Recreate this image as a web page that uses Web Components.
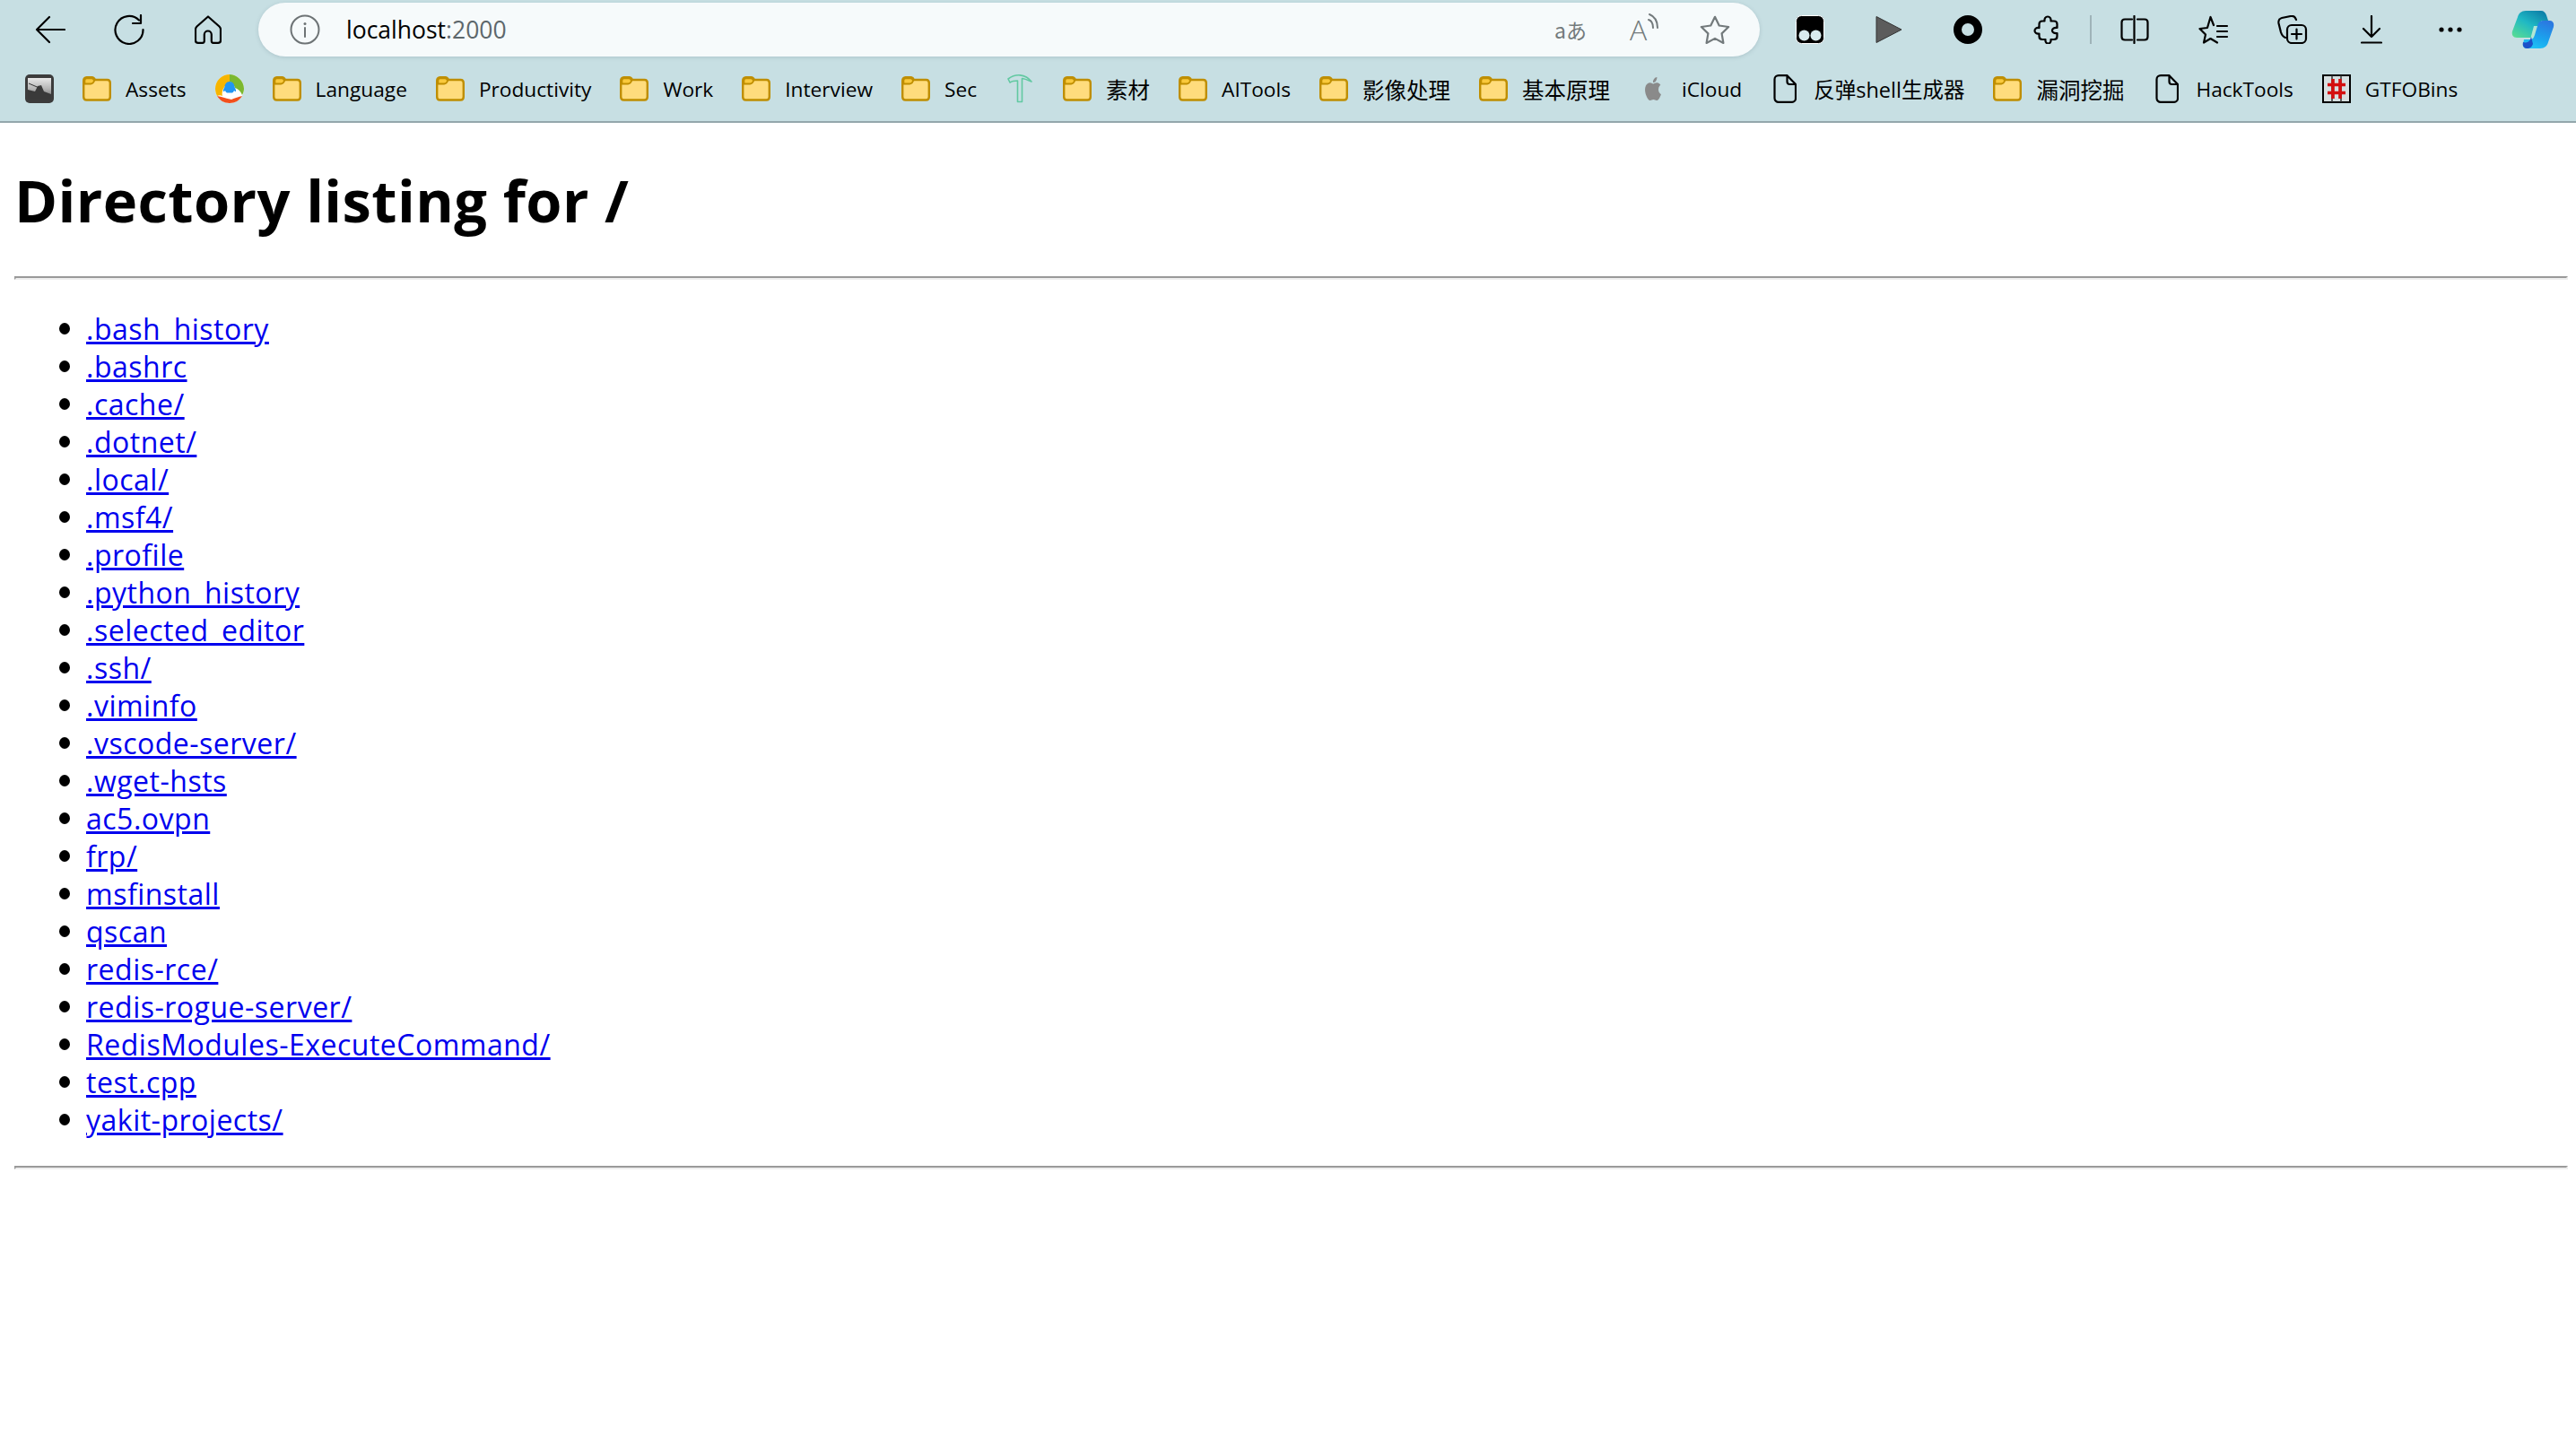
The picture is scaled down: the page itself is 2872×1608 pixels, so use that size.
<!DOCTYPE html>
<html lang="en">
<head>
<meta charset="utf-8">
<title>Directory listing for /</title>
<style>
  html, body { margin: 0; padding: 0; background: #fff; }
  body {
    font-family: "Open Sans", "Noto Sans CJK SC", sans-serif;
    --bar-color: #c7dfe3;
  }
</style>
</head>
<body>
<browser-toolbar></browser-toolbar>
<bookmark-bar></bookmark-bar>
<directory-page heading="Directory listing for /">
  <file-row>.bash_history</file-row>
  <file-row>.bashrc</file-row>
  <file-row>.cache/</file-row>
  <file-row>.dotnet/</file-row>
  <file-row>.local/</file-row>
  <file-row>.msf4/</file-row>
  <file-row>.profile</file-row>
  <file-row>.python_history</file-row>
  <file-row>.selected_editor</file-row>
  <file-row>.ssh/</file-row>
  <file-row>.viminfo</file-row>
  <file-row>.vscode-server/</file-row>
  <file-row>.wget-hsts</file-row>
  <file-row>ac5.ovpn</file-row>
  <file-row>frp/</file-row>
  <file-row>msfinstall</file-row>
  <file-row>qscan</file-row>
  <file-row>redis-rce/</file-row>
  <file-row>redis-rogue-server/</file-row>
  <file-row>RedisModules-ExecuteCommand/</file-row>
  <file-row>test.cpp</file-row>
  <file-row>yakit-projects/</file-row>
</directory-page>

<script>
// All the icons live here, drawn on a 32 box unless they say otherwise.
const line = 'fill="none" stroke="#000" stroke-width="2.2" stroke-linecap="round" stroke-linejoin="round"';
const ICONS = {
  back: `<svg width="34" height="32" viewBox="0 0 34 32"><path ${line} d="M16 2 2 16l14 14M2 16h31"/></svg>`,
  reload: `<svg width="34" height="34" viewBox="0 0 34 34"><path ${line} d="M28 6.5A15.5 15.5 0 1 0 32.5 17M30 1v9h-9"/></svg>`,
  home: `<svg width="30" height="32" viewBox="0 0 30 32"><path ${line} d="M15 1.5 2.500 12.500C1.500 13.400 1 14.400 1 15.800V28c0 1.600 1.200 2.800 2.800 2.800h5c1.200 0 2-.9 2-2v-7.300c0-2.200 1.800-4 4-4s4 1.800 4 4v7.300c0 1.100.9 2 2 2h5.300c1.600 0 2.900-1.200 2.900-2.800V15.800c0-1.400-.5-2.400-1.500-3.300Z"/></svg>`,
  info: `<svg width="34" height="34" viewBox="0 0 34 34"><circle cx="17" cy="17" r="15.500" fill="none" stroke="#6d7375" stroke-width="2"/><path d="M17 15v10" stroke="#6d7375" stroke-width="2" stroke-linecap="round"/><circle cx="17" cy="10.500" r="1.500" fill="#6d7375"/></svg>`,
  star: `<svg width="34" height="32" viewBox="0 0 34 32"><path fill="none" stroke="#737a7c" stroke-width="2.200" stroke-linejoin="round" d="M17 1.800l4.700 9.700 10.500 1.500-7.600 7.400 1.800 10.600L17 25.900 7.600 31l1.800-10.600L1.800 13l10.500-1.500Z"/></svg>`,
  tamper: `<svg width="32" height="32" viewBox="0 0 32 32"><rect x=".5" y=".5" width="31" height="31" rx="6" fill="#000" stroke="#fff"/><circle cx="9.500" cy="22.500" r="6" fill="#d9ebee"/><circle cx="22.500" cy="22.500" r="6" fill="#d9ebee"/></svg>`,
  play: `<svg width="30" height="32" viewBox="0 0 30 32"><path fill="#5c5c5c" stroke="#333" d="M1 1.500 29 16 1 30.500Z"/></svg>`,
  ring: `<svg width="32" height="32" viewBox="0 0 32 32"><circle cx="16" cy="16" r="11.500" fill="none" stroke="#000" stroke-width="9"/></svg>`,
  puzzle: `<svg width="30" height="32" viewBox="0 0 30 32"><path ${line} d="M10 6.500h2.500c-.4-3 1.200-5 3.500-5s3.900 2 3.500 5h3.500c2 0 3.500 1.500 3.500 3.500v4c-3-.6-5.500.8-5.500 3s2.500 3.600 5.500 3v3.500c0 2-1.500 3.500-3.500 3.500h-3.500c.4 3-1.200 4.600-3 4.600s-3.400-1.600-3-4.600H10c-2 0-3.500-1.500-3.500-3.500v-3c-3 .6-5-1-5-3.200s2-3.800 5-3.200V10c0-2 1.500-3.500 3.500-3.500Z"/></svg>`,
  split: `<svg width="32" height="32" viewBox="0 0 32 32"><path ${line} d="M13 4.500H5C3 4.500 1.500 6 1.500 8v16c0 2 1.500 3.500 3.500 3.500h8M19 4.500h8c2 0 3.500 1.500 3.500 3.500v16c0 2-1.500 3.500-3.500 3.500h-8M15.500 1v30"/></svg>`,
  favs: `<svg width="34" height="32" viewBox="0 0 34 32"><path ${line} d="M21 30.500 13.500 26 6 30.500 8 21.500 1.500 15l8.500-1L13.500 2 17 11M21 12h11M21 18h11M21 24h11"/></svg>`,
  collect: `<svg width="34" height="32" viewBox="0 0 34 32"><path ${line} d="M9 25C6 24 5 22 4 19L1.500 9C1 6 2.500 3.500 5 3L15 1c3-.5 5 1 6 4"/><rect ${line} x="11" y="11" width="21" height="20" rx="5"/><path ${line} d="M21.500 15.500v11M16 21h11"/></svg>`,
  download: `<svg width="24" height="32" viewBox="0 0 24 32"><path ${line} d="M12 1v23M3 15l9 9 9-9M1 30.500h22"/></svg>`,
  more: `<svg width="26" height="6" viewBox="0 0 26 6"><circle cx="3" cy="3" r="2.600"/><circle cx="13" cy="3" r="2.600"/><circle cx="23" cy="3" r="2.600"/></svg>`,
  copilot: `<svg width="48" height="44" viewBox="0 0 48 44">
    <defs>
      <linearGradient id="cl" x1=".8" y1="0" x2=".1" y2="1"><stop offset="0" stop-color="#0c7fa8"/><stop offset=".45" stop-color="#1fb8c4"/><stop offset="1" stop-color="#5fe08f"/></linearGradient>
      <linearGradient id="cr" x1=".7" y1="0" x2=".3" y2="1"><stop offset="0" stop-color="#2b78e0"/><stop offset=".6" stop-color="#1aa4ee"/><stop offset="1" stop-color="#20c4f5"/></linearGradient>
    </defs>
    <path fill="url(#cl)" d="M16 1h17c3 0 5 2 6 5l2 6h-5c-3 0-5 2-6 5l-5 17c-1-2-2-3-4-3H6c-4 0-6-3-5-7L7 8c1-4 4-7 9-7Z"/>
    <path fill="#c9ecd9" d="M21 33h7l3-15-6 0Z" opacity=".85"/>
    <path fill="url(#cr)" d="M32 43H17c-3 0-5-3-4-5l1-5h6c4 0 5-2 6-5l3-10c1-4 3-6 7-6h7c3 0 5 3 4 7l-6 17c-1 4-4 7-9 7Z"/>
    <path fill="#1d50c8" d="M13 36c3 1 7 0 8-3l1-3 2 8c-1 3-3 5-7 5-3 0-5-3-4-7Z"/>
  </svg>`,
  folder: `<svg width="32" height="28" viewBox="0 0 32 28"><path fill="#ffdc7d" stroke="#bf8e00" stroke-width="2.400" stroke-linejoin="round" d="M1.200 5c0-2 1.300-3.800 3.300-3.800h6c1.500 0 2.500.6 3.500 2.800h13.500c2.500 0 3.300 1.500 3.300 3.500v15.500c0 2.500-1.300 3.500-3.300 3.500H4.500c-2 0-3.300-1.300-3.300-3.500Z"/><path fill="#f9c93c" stroke="#bf8e00" stroke-width="1.800" d="M2.400 8.500V5c0-1.300.8-2.600 2.200-2.600h5.600c1.400 0 2 .8 3 2.600-1 2.500-2 3.500-4 3.500Z"/></svg>`,
  doc: `<svg width="26" height="32" viewBox="0 0 26 32"><path ${line} d="M6 1.200h9.500L25 11v15.500c0 2.500-1.800 4.300-4 4.300H6c-2.500 0-4.500-1.800-4.500-4.300V5.500C1.500 3 3.500 1.200 6 1.200ZM15.500 1.200V8c0 2 1 3 3 3H25"/></svg>`,
  avatar: `<svg width="32" height="32" viewBox="0 0 32 32">
    <defs><linearGradient id="av" x1="0" y1="0" x2="0" y2="1"><stop offset="0" stop-color="#e8e8e8"/><stop offset=".5" stop-color="#b5b5b5"/><stop offset="1" stop-color="#666"/></linearGradient></defs>
    <rect width="32" height="32" rx="5" fill="#3c3c3c"/><rect x="3" y="4" width="26" height="24" fill="url(#av)"/>
    <path fill="#3a3a3a" d="M3 17l8 2 3-6 4-1 3 7 8 3v6H3Z"/><path stroke="#333" stroke-width="1" d="M4 10l14 6"/>
  </svg>`,
  qq: `<svg width="32" height="32" viewBox="0 0 32 32">
    <circle cx="16" cy="16" r="16" fill="#fff"/>
    <path fill="#f7b500" d="M16 0C7 0 0 7 0 16c0 3 1 6 2 8 2-1 4-1 6 0-1-4 0-10 8-16Z"/>
    <path fill="#7cb82f" d="M16 0c8 0 16 7 16 16 0 3-1 5-2 7-2-5-5-7-8-8-1-3-3-6-6-7Z"/>
    <path fill="#f2501c" d="M2 24c3 5 8 8 14 8 6 0 11-3 14-8-4 1-8 2-12 4-5-1-10-3-16-4Z"/>
    <path fill="#2296f3" d="M16 8c3.500 0 5.500 3 5.500 6 1 1.500 1.700 3.500 1.500 5-1 0-1.500-.5-2-1-.5 1-1 2-2 2.500h-6c-1-.5-1.500-1.500-2-2.500-.5.5-1 1-2 1-.2-1.500.5-3.500 1.500-5 0-3 2-6 5.500-6Z"/>
  </svg>`,
  pick: `<svg width="28" height="32" viewBox="0 0 28 32"><path fill="none" stroke="#62c9a2" stroke-width="1.600" stroke-linejoin="round" d="M1 5C9-1 20-1 27 8 20 5 17 4.500 16.500 4.500V30.500h-5V7C8 7 5 7.500 3 9Z"/></svg>`,
  apple: `<svg width="22" height="26" viewBox="0 0 24 24" preserveAspectRatio="none"><path fill="#8a8a8a" d="M12.152 6.896c-.948 0-2.415-1.078-3.960-1.040-2.040.027-3.910 1.183-4.961 3.014-2.117 3.675-.546 9.103 1.519 12.090 1.013 1.454 2.208 3.090 3.792 3.039 1.520-.065 2.090-.987 3.935-.987 1.831 0 2.350.987 3.960.948 1.637-.026 2.676-1.480 3.676-2.948 1.156-1.688 1.636-3.325 1.662-3.415-.039-.013-3.182-1.221-3.220-4.857-.026-3.040 2.480-4.494 2.597-4.559-1.429-2.090-3.623-2.324-4.390-2.376-2-.156-3.675 1.090-4.610 1.090zM15.530 3.830c.843-1.012 1.400-2.427 1.245-3.830-1.207.052-2.662.805-3.532 1.818-.780.896-1.454 2.338-1.273 3.714 1.338.104 2.715-.688 3.559-1.701"/></svg>`,
  gtfo: `<svg width="32" height="32" viewBox="0 0 32 32"><rect x="1" y="1" width="30" height="30" fill="#d6dfe0" stroke="#000" stroke-width="2"/><path stroke="#333" stroke-width="1.500" d="M11 1v30M21 1v30"/><path stroke="#d40f0f" stroke-width="3.600" d="M12 5v22M20 5v22M6 11.500h20M6 20.500h20"/></svg>`
};

class ToolButton extends HTMLElement {
  constructor() {
    super();
    this.attachShadow({ mode: "open" });
  }
  connectedCallback() {
    const width = this.getAttribute("width") || 88;
    this.shadowRoot.innerHTML = `
      <style>
        :host { display: flex; align-items: center; justify-content: center; height: 60px; flex: none; width: ${width}px; }
        svg { display: block; }
      </style>
      ${ICONS[this.getAttribute("icon")]}
    `;
  }
}

class AddressBar extends HTMLElement {
  constructor() {
    super();
    this.attachShadow({ mode: "open" });
  }
  connectedCallback() {
    this.shadowRoot.innerHTML = `
      <style>
        :host {
          display: flex; align-items: center; flex: 1; height: 60px; box-sizing: border-box;
          background: #f6fafb; border-radius: 30px; padding: 0 33px 0 35px;
          box-shadow: 0 1px 4px rgba(90, 120, 130, .25);
        }
        .url { margin-left: 29px; font-size: 26.500px; color: #000; flex: 1; }
        .url span { color: #5d676b; }
        .act { display: flex; align-items: center; gap: 48px; color: #737a7c; }
        .trans { font-size: 23px; font-family: "Noto Sans CJK JP", "Open Sans", sans-serif; }
        .aloud { position: relative; font-size: 32px; font-weight: 300; width: 30px; line-height: 34px; }
        .aloud svg { position: absolute; left: 19px; top: -1px; }
      </style>
      ${ICONS.info}
      <div class="url">localhost<span>:2000</span></div>
      <div class="act">
        <span class="trans">aあ</span>
        <span class="aloud">A<svg width="14" height="18" viewBox="0 0 14 18"><path fill="none" stroke="#737a7c" stroke-width="2" stroke-linecap="round" d="M2 7c3 1 5 4 5 9M3 1c5 2 9 7 9 15"/></svg></span>
        ${ICONS.star}
      </div>
    `;
  }
}

class BrowserToolbar extends HTMLElement {
  constructor() {
    super();
    this.attachShadow({ mode: "open" });
  }
  connectedCallback() {
    this.shadowRoot.innerHTML = `
      <style>
        :host {
          display: flex; align-items: center; box-sizing: border-box; height: 67px;
          padding: 3px 0 4px 12px; background: var(--bar-color);
        }
        address-bar { margin: 0 12px; }
        .sep { width: 2px; height: 32px; background: #9fb3b8; margin: 0 4px 0 4px; flex: none; }
      </style>
      <tool-button icon="back"></tool-button>
      <tool-button icon="reload"></tool-button>
      <tool-button icon="home"></tool-button>
      <address-bar></address-bar>
      <tool-button icon="tamper"></tool-button>
      <tool-button icon="play"></tool-button>
      <tool-button icon="ring"></tool-button>
      <tool-button icon="puzzle"></tool-button>
      <div class="sep"></div>
      <tool-button icon="split"></tool-button>
      <tool-button icon="favs"></tool-button>
      <tool-button icon="collect"></tool-button>
      <tool-button icon="download"></tool-button>
      <tool-button icon="more"></tool-button>
      <tool-button icon="copilot" width="96"></tool-button>
    `;
  }
}

// Every bookmark icon sits in the same 32 wide box, narrow glyphs get centered in it
class BookmarkItem extends HTMLElement {
  constructor() {
    super();
    this.attachShadow({ mode: "open" });
  }
  connectedCallback() {
    this.shadowRoot.innerHTML = `
      <style>
        :host { display: flex; align-items: center; gap: 16px; flex: none; height: 32px; font-size: 22.700px; color: #000; white-space: nowrap; }
        :host([cjk]) { font-size: 24.500px; }
        :host([mixed]) { font-size: 23.500px; }
        .icon { display: flex; align-items: center; justify-content: center; width: 32px; height: 32px; flex: none; }
        svg { display: block; flex: none; }
      </style>
      <span class="icon">${ICONS[this.getAttribute("icon")]}</span>
      <slot></slot>
    `;
  }
}

class BookmarkBar extends HTMLElement {
  constructor() {
    super();
    this.attachShadow({ mode: "open" });
  }
  connectedCallback() {
    this.shadowRoot.innerHTML = `
      <style>
        :host {
          display: flex; align-items: center; gap: 32px; box-sizing: border-box; height: 70px;
          padding: 0 0 4px 28px; background: var(--bar-color); border-bottom: 2px solid #94a7ac;
        }
      </style>
      <bookmark-item icon="avatar"></bookmark-item>
      <bookmark-item icon="folder">Assets</bookmark-item>
      <bookmark-item icon="qq"></bookmark-item>
      <bookmark-item icon="folder">Language</bookmark-item>
      <bookmark-item icon="folder">Productivity</bookmark-item>
      <bookmark-item icon="folder">Work</bookmark-item>
      <bookmark-item icon="folder">Interview</bookmark-item>
      <bookmark-item icon="folder">Sec</bookmark-item>
      <bookmark-item icon="pick"></bookmark-item>
      <bookmark-item icon="folder" cjk>素材</bookmark-item>
      <bookmark-item icon="folder">AITools</bookmark-item>
      <bookmark-item icon="folder" cjk>影像处理</bookmark-item>
      <bookmark-item icon="folder" cjk>基本原理</bookmark-item>
      <bookmark-item icon="apple">iCloud</bookmark-item>
      <bookmark-item icon="doc" mixed>反弹shell生成器</bookmark-item>
      <bookmark-item icon="folder" cjk>漏洞挖掘</bookmark-item>
      <bookmark-item icon="doc">HackTools</bookmark-item>
      <bookmark-item icon="gtfo">GTFOBins</bookmark-item>
    `;
  }
}

class FileRow extends HTMLElement {
  constructor() {
    super();
    this.attachShadow({ mode: "open" });
  }
  connectedCallback() {
    this.shadowRoot.innerHTML = `
      <style>
        :host { display: flex; align-items: center; margin-left: 50px; height: 42px; line-height: 42px; font-size: 32px; letter-spacing: .5px; }
        .dot { width: 12px; height: 13px; border-radius: 50%; background: #000; margin: -2px 18px 0 0; flex: none; }
        a { color: #00e; text-decoration: underline; }
      </style>
      <span class="dot"></span>
      <a href="#"><slot></slot></a>
    `;
  }
}

class DirectoryPage extends HTMLElement {
  constructor() {
    super();
    this.attachShadow({ mode: "open" });
  }
  connectedCallback() {
    this.shadowRoot.innerHTML = `
      <style>
        :host { display: block; padding: 0 9px 0 16px; }
        h1 { margin: 44px 0 43px; font-size: 65px; line-height: 84px; letter-spacing: .4px; font-weight: 700; color: #000; }
        hr { margin: 0; height: 0; border-style: solid; border-width: 2px; border-color: #9a9a9a #eee #eee #9a9a9a; }
        .files { margin: 34px 0 30px; }
      </style>
      <h1>${this.getAttribute("heading")}</h1>
      <hr>
      <div class="files"><slot></slot></div>
      <hr>
    `;
  }
}

customElements.define("tool-button", ToolButton);
customElements.define("address-bar", AddressBar);
customElements.define("browser-toolbar", BrowserToolbar);
customElements.define("bookmark-item", BookmarkItem);
customElements.define("bookmark-bar", BookmarkBar);
customElements.define("file-row", FileRow);
customElements.define("directory-page", DirectoryPage);
</script>
</body>
</html>
